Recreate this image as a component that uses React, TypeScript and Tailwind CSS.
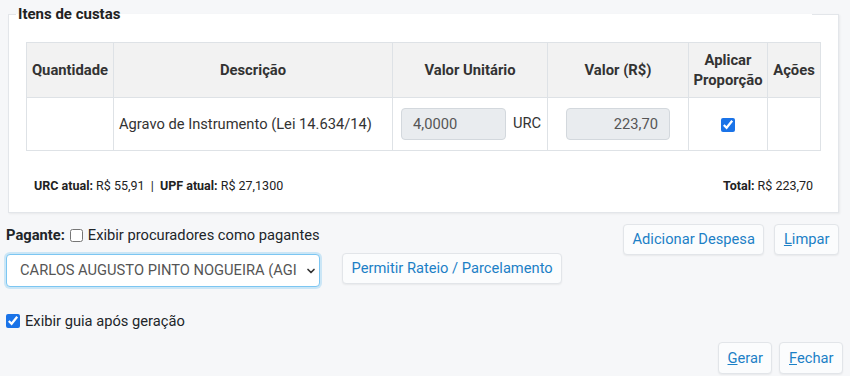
import React from 'react';
import { ChevronDown } from 'lucide-react';

// botão padrão da tela (fundo claro, texto azul)
const Btn = ({ children, className = '' }: { children: React.ReactNode; className?: string }) => (
  <button
    type="button"
    className={`h-[31px] px-[8.5px] rounded-[4px] border border-[#e2e5e9] bg-[#fbfcfd] text-[14.7px] text-[#1c80c6] shadow-[0_1px_2px_rgba(0,0,0,0.06)] leading-none ${className}`}
  >
    {children}
  </button>
);

export default function App() {
  return (
    <div className="min-h-[376px] bg-[#f6f7f9] font-['Roboto','Liberation_Sans',sans-serif] text-[#212529]">
      <div className="pt-[4px] pl-[8px] pr-[11px]">
        <fieldset className="border border-[#e3e6ea] bg-white px-[7px] pb-[18px] shadow-[1px_1px_2px_rgba(0,0,0,0.06)]">
          <legend className="w-[796px] px-[2px] text-[15px] leading-[20px] font-bold text-[#222]">Itens de custas</legend>
          <div className="mt-[18px] ml-[10px] mr-[10px]">
            <table className="w-full table-fixed border-collapse text-[#333]">
              <thead>
                <tr className="bg-[#f2f2f2] text-[14.8px] leading-[20px] font-bold">
                  <th className="w-[87px] border border-[#dee2e6] py-[7px] px-[3px]">Quantidade</th>
                  <th className="w-[279px] border border-[#dee2e6] py-[7px] px-[4px]">Descrição</th>
                  <th className="w-[155px] border border-[#dee2e6] py-[7px] px-[4px]">Valor Unitário</th>
                  <th className="w-[141px] border border-[#dee2e6] py-[7px] px-[4px]">Valor (R$)</th>
                  <th className="w-[79px] border border-[#dee2e6] py-[7px] px-[3px]">Aplicar Proporção</th>
                  <th className="w-[53px] border border-[#dee2e6] py-[7px] px-[3px]">Ações</th>
                </tr>
              </thead>
              <tbody>
                <tr className="text-[14.7px]">
                  <td className="border border-[#dee2e6]"></td>
                  <td className="border border-[#dee2e6] px-[5px]">Agravo de Instrumento (Lei 14.634/14)</td>
                  <td className="border border-[#dee2e6] py-[10px] pl-[8px]">
                    <div className="flex items-center gap-[7px]">
                      <input
                        readOnly
                        value="4,0000"
                        className="h-[32px] w-[105px] rounded-[4px] border border-[#d3d8dd] bg-[#e9ecef] px-[11px] text-[14.7px] text-[#555]"
                      />
                      <span className="-mt-[2px]">URC</span>
                    </div>
                  </td>
                  <td className="border border-[#dee2e6] py-[10px]">
                    <div className="flex justify-center">
                      <input
                        readOnly
                        value="223,70"
                        className="h-[32px] w-[104px] rounded-[4px] border border-[#d3d8dd] bg-[#e9ecef] px-[11px] text-right text-[14.7px] text-[#555]"
                      />
                    </div>
                  </td>
                  <td className="border border-[#dee2e6] text-center">
                    <input type="checkbox" defaultChecked className="h-[14px] w-[14px] align-middle accent-[#1a73e8]" />
                  </td>
                  <td className="border border-[#dee2e6]"></td>
                </tr>
              </tbody>
            </table>
            <div className="mt-[27px] flex justify-between px-[8px] text-[12.5px] leading-[16px] text-[#222]">
              <span>
                <b>URC atual:</b> R$ 55,91 &nbsp;|&nbsp; <b>UPF atual:</b> R$ 27,1300
              </span>
              <span>
                <b>Total:</b> R$ 223,70
              </span>
            </div>
          </div>
        </fieldset>
      </div>

      <div className="mt-[11px] flex items-start justify-between pl-[6px] pr-[11px]">
        <div>
          <div className="flex items-center text-[14.7px] leading-[20px] h-[20px] mt-[1px]">
            <b className="mr-[5px]">Pagante:</b>
            <input type="checkbox" className="mr-[5px] h-[13px] w-[13px]" />
            <span>Exibir procuradores como pagantes</span>
          </div>
          <div className="mt-[9px] flex items-start gap-[22px]">
            <div className="relative">
              <select className="h-[33px] w-[314px] appearance-none rounded-[4px] border border-[#7cc6f2] bg-white pl-[13px] pr-[18px] text-[14.7px] text-[#555] shadow-[0_0_0_2px_rgba(124,198,242,0.35)] outline-none">
                <option>CARLOS AUGUSTO PINTO NOGUEIRA (AGI</option>
              </select>
              <ChevronDown size={12} strokeWidth={3.4} className="pointer-events-none absolute right-[3px] top-[11px] text-[#333]" />
            </div>
            <Btn className="-mt-[1px]">Permitir Rateio / Parcelamento</Btn>
          </div>
        </div>
        <div className="flex gap-[10px]">
          <Btn>Adicionar Despesa</Btn>
          <Btn>
            <u>L</u>impar
          </Btn>
        </div>
      </div>

      <div className="mt-[24px] flex items-center pl-[6px] text-[14.7px] leading-[20px]">
        <input type="checkbox" defaultChecked className="mr-[5px] h-[14px] w-[14px] accent-[#1a73e8]" />
        <span>Exibir guia após geração</span>
      </div>

      <div className="mt-[11px] flex justify-end gap-[7px] pr-[7px]">
        <Btn className="h-[32px]">
          <u>G</u>erar
        </Btn>
        <Btn className="h-[32px]">
          <u>F</u>echar
        </Btn>
      </div>
    </div>
  );
}
